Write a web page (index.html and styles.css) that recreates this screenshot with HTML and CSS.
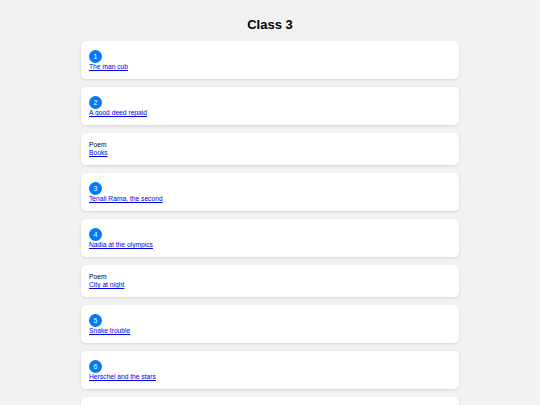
FILE: index.html
```html
<!DOCTYPE html>
<html lang="en">
<head>
<meta charset="utf-8">
<title>Class 3</title>
<link rel="stylesheet" href="styles.css">
</head>
<body>
<h1 class="title">Class 3</h1>
<div class="list">
  <div class="card"><span class="badge">1</span><a class="link" href="#">The man cub</a></div>
  <div class="card"><span class="badge">2</span><a class="link" href="#">A good deed repaid</a></div>
  <div class="card"><span class="kind">Poem</span><a class="link" href="#">Books</a></div>
  <div class="card"><span class="badge">3</span><a class="link" href="#">Tenali Rama, the second</a></div>
  <div class="card"><span class="badge">4</span><a class="link" href="#">Nadia at the olympics</a></div>
  <div class="card"><span class="kind">Poem</span><a class="link" href="#">City at night</a></div>
  <div class="card"><span class="badge">5</span><a class="link" href="#">Snake trouble</a></div>
  <div class="card"><span class="badge">6</span><a class="link" href="#">Herschel and the stars</a></div>
  <div class="card"><span class="badge">7</span><a class="link" href="#">The clever monkey</a></div>
</div>
</body>
</html>
```
FILE: styles.css
```css
html, body {
  margin: 0;
  padding: 0;
}
body {
  background: #f2f2f2;
  font-family: "Liberation Sans", Arial, sans-serif;
  color: #000;
}
.title {
  font-size: 13px;
  line-height: 15px;
  font-weight: bold;
  text-align: center;
  margin: 17px 0 9px;
}
.list {
  width: 70%;
  margin: 0 auto;
  display: flex;
  flex-direction: column;
  gap: 8px;
}
.card {
  background: #fff;
  border-radius: 5px;
  padding: 8px;
  box-shadow: 0 1px 3px rgba(0, 0, 0, 0.12);
  display: flex;
  flex-direction: column;
  align-items: flex-start;
}
.badge {
  width: 13px;
  height: 13px;
  margin-top: 1px;
  border-radius: 50%;
  background: #007bff;
  color: #fff;
  font-size: 7px;
  line-height: 13px;
  text-align: center;
}
.kind {
  font-size: 6.7px;
  line-height: 8px;
}
.link {
  font-size: 6.7px;
  line-height: 8px;
  color: #0000ee;
  text-decoration: underline;
}
```
